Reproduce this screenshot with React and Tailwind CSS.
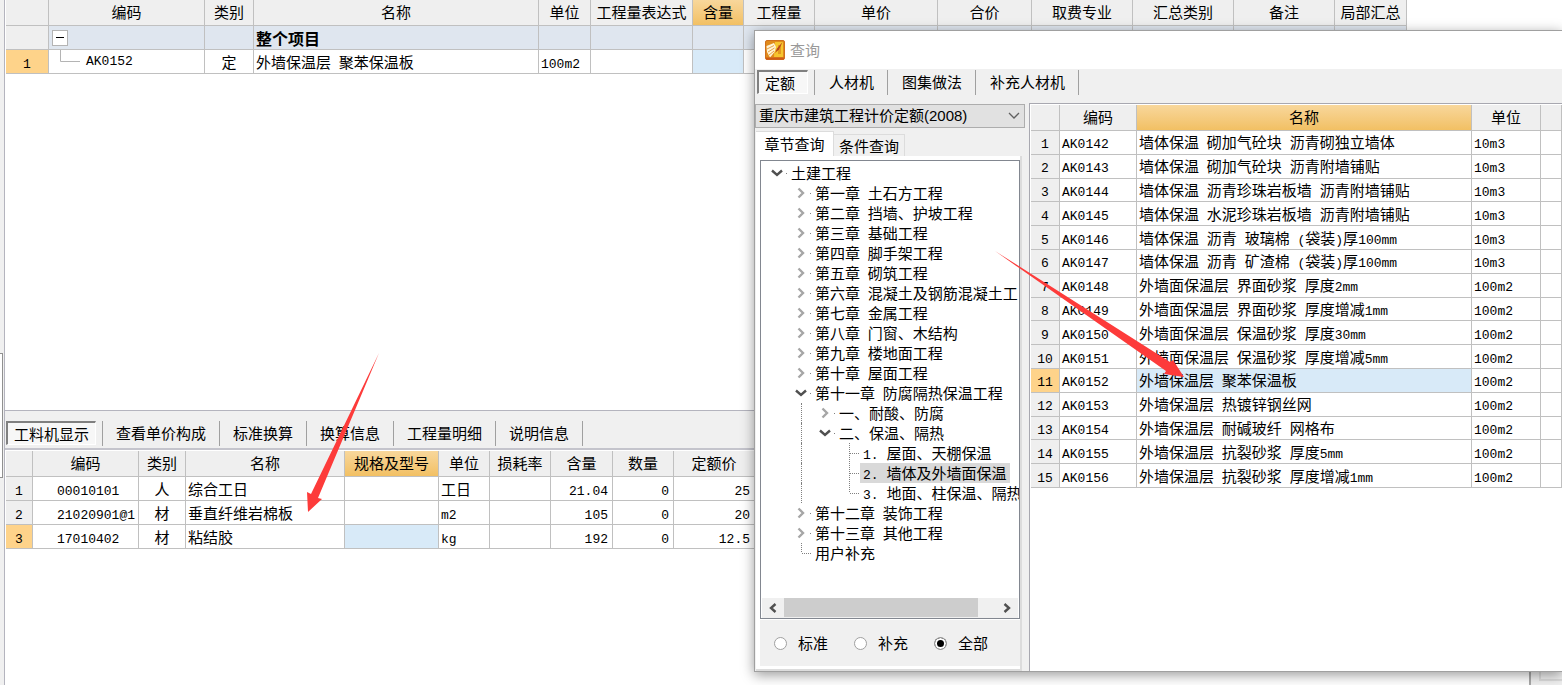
// Budget editor: item grid on top, resource breakdown below, quota lookup window over both
import React, { useState } from 'react';
import clsx from 'clsx';

// ============================================================================
// DATA
// ============================================================================
const ITEM_COLUMNS = [
  { label: '', width: 'w-[43px]' },
  { label: '编码', width: 'w-[156px]' },
  { label: '类别', width: 'w-[49px]' },
  { label: '名称', width: 'w-[285px]' },
  { label: '单位', width: 'w-[52px]' },
  { label: '工程量表达式', width: 'w-[102px]' },
  { label: '含量', width: 'w-[51px]', active: true },
  { label: '工程量', width: 'w-[71px]' },
  { label: '单价', width: 'w-[123px]' },
  { label: '合价', width: 'w-[94px]' },
  { label: '取费专业', width: 'w-[101px]' },
  { label: '汇总类别', width: 'w-[101px]' },
  { label: '备注', width: 'w-[101px]' },
  { label: '局部汇总', width: 'w-[72px]' },
];

const RESOURCE_COLUMNS = [
  { label: '', width: 'w-[27px]' },
  { label: '编码', width: 'w-[106px]' },
  { label: '类别', width: 'w-[47px]' },
  { label: '名称', width: 'w-[159px]' },
  { label: '规格及型号', width: 'w-[94px]', active: true },
  { label: '单位', width: 'w-[51px]' },
  { label: '损耗率', width: 'w-[61px]' },
  { label: '含量', width: 'w-[62px]' },
  { label: '数量', width: 'w-[61px]' },
  { label: '定额价', width: 'w-[81px]' },
];

const RESOURCES = [
  { code: '00010101', type: '人', name: '综合工日', unit: '工日', content: '21.04', amount: '0', price: '25' },
  { code: '21020901@1', type: '材', name: '垂直纤维岩棉板', unit: 'm2', content: '105', amount: '0', price: '20' },
  { code: '17010402', type: '材', name: '粘结胶', unit: 'kg', content: '192', amount: '0', price: '12.5' },
];

const QUOTA_COLUMNS = [
  { label: '', width: 'w-[29px]' },
  { label: '编码', width: 'w-[77px]' },
  { label: '名称', width: 'w-[335px]', active: true },
  { label: '单位', width: 'w-[69px]' },
  { label: '', width: 'w-auto' },
];

const QUOTAS = [
  ['AK0142', '墙体保温 砌加气砼块 沥青砌独立墙体', '10m3'],
  ['AK0143', '墙体保温 砌加气砼块 沥青附墙铺贴', '10m3'],
  ['AK0144', '墙体保温 沥青珍珠岩板墙 沥青附墙铺贴', '10m3'],
  ['AK0145', '墙体保温 水泥珍珠岩板墙 沥青附墙铺贴', '10m3'],
  ['AK0146', '墙体保温 沥青 玻璃棉 (袋装)厚100mm', '10m3'],
  ['AK0147', '墙体保温 沥青 矿渣棉 (袋装)厚100mm', '10m3'],
  ['AK0148', '外墙面保温层 界面砂浆 厚度2mm', '100m2'],
  ['AK0149', '外墙面保温层 界面砂浆 厚度增减1mm', '100m2'],
  ['AK0150', '外墙面保温层 保温砂浆 厚度30mm', '100m2'],
  ['AK0151', '外墙面保温层 保温砂浆 厚度增减5mm', '100m2'],
  ['AK0152', '外墙保温层 聚苯保温板', '100m2'],
  ['AK0153', '外墙保温层 热镀锌钢丝网', '100m2'],
  ['AK0154', '外墙保温层 耐碱玻纤 网格布', '100m2'],
  ['AK0155', '外墙保温层 抗裂砂浆 厚度5mm', '100m2'],
  ['AK0156', '外墙保温层 抗裂砂浆 厚度增减1mm', '100m2'],
];

// guide: ancestor level whose line runs past this row; last: closes its branch
const TREE = [
  { level: 0, label: '土建工程', open: true },
  { level: 1, label: '第一章 土石方工程', open: false },
  { level: 1, label: '第二章 挡墙、护坡工程', open: false },
  { level: 1, label: '第三章 基础工程', open: false },
  { level: 1, label: '第四章 脚手架工程', open: false },
  { level: 1, label: '第五章 砌筑工程', open: false },
  { level: 1, label: '第六章 混凝土及钢筋混凝土工', open: false },
  { level: 1, label: '第七章 金属工程', open: false },
  { level: 1, label: '第八章 门窗、木结构', open: false },
  { level: 1, label: '第九章 楼地面工程', open: false },
  { level: 1, label: '第十章 屋面工程', open: false },
  { level: 1, label: '第十一章 防腐隔热保温工程', open: true },
  { level: 2, label: '一、耐酸、防腐', open: false, guide: 1 },
  { level: 2, label: '二、保温、隔热', open: true, guide: 1 },
  { level: 3, label: '1. 屋面、天棚保温', guide: 1 },
  { level: 3, label: '2. 墙体及外墙面保温', guide: 1 },
  { level: 3, label: '3. 地面、柱保温、隔热', guide: 1, last: true },
  { level: 1, label: '第十二章 装饰工程', open: false },
  { level: 1, label: '第十三章 其他工程', open: false },
  { level: 1, label: '用户补充', last: true },
];

// ============================================================================
// SHARED PIECES
// ============================================================================

// Latin runs and spaces are set half a Han character wide
function Text({ children }) {
  return String(children)
    .split(/([\x20-\x7e]+)/)
    .filter(Boolean)
    .map((run, i) =>
      /^[\x20-\x7e]/.test(run) ? (
        <span key={i} className="font-['Liberation_Mono',monospace] text-[13px] leading-none whitespace-pre">{run}</span>
      ) : (
        run
      )
    );
}

function HeadRow({ columns }) {
  return (
    <thead>
      <tr className="h-[26px]">
        {columns.map((col, i) => (
          <th
            key={i}
            className={clsx(
              col.width,
              'border-r border-b border-[#c0c0c0] p-0 pb-0.5 text-center font-normal',
              col.active ? 'bg-linear-to-b from-[#f8d79b] to-[#f2c063]' : 'bg-[#efefef]'
            )}
          >
            {col.label}
          </th>
        ))}
      </tr>
    </thead>
  );
}

function Cell({ className, children }) {
  return (
    <td className={clsx('overflow-hidden border-r border-b border-[#c0c0c0] px-0.5 py-0 whitespace-nowrap', className)}>
      {children}
    </td>
  );
}

function RowNumber({ n, active }) {
  return (
    <Cell className={clsx('text-center', active ? 'bg-[#fed38a]' : 'bg-[#efefef]')}>
      <Text>{n}</Text>
    </Cell>
  );
}

function ButtonBar({ items, className, firstPadding, padding }) {
  const [active, setActive] = useState(items[0]);
  return (
    <div className={clsx('flex items-start', className)}>
      {items.map((item, i) => (
        <div key={item} className={clsx('h-[25px] border-r border-[#a0a0a0]', i === 0 && 'pr-[6px]')}>
          <button
            type="button"
            onClick={() => setActive(item)}
            className={clsx(
              'h-6',
              i === 0 ? firstPadding : padding,
              item === active
                ? 'border-t-2 border-r border-b border-l-2 border-t-[#808080] border-r-white border-b-white border-l-[#808080] bg-[#f7f7f7] leading-5'
                : 'leading-6'
            )}
          >
            {item}
          </button>
        </div>
      ))}
    </div>
  );
}

function Chevron({ open }) {
  return (
    <svg viewBox="0 0 16 20" className="h-5 w-4 shrink-0" fill="none" strokeWidth="2.4">
      {open ? (
        <path d="M3 7.5 8 12l5-4.5" stroke="#505050" />
      ) : (
        <path d="M5.5 5.5 10 10l-4.5 4.5" stroke="#a6a6a6" />
      )}
    </svg>
  );
}

// ============================================================================
// MAIN WINDOW
// ============================================================================
function ItemGrid() {
  return (
    <table className="w-[1401px] table-fixed border-separate border-spacing-0 leading-5">
      <HeadRow columns={ITEM_COLUMNS} />
      <tbody>
        <tr className="h-6 bg-[#dfe6ef]">
          <RowNumber n="" />
          <Cell>
            <button type="button" aria-label="折叠" className="ml-px flex size-4 items-center justify-center border border-[#b4b4b4] bg-white">
              <span className="h-px w-2 bg-black" />
            </button>
          </Cell>
          <Cell />
          <Cell className="text-base leading-5 font-bold">整个项目</Cell>
          {ITEM_COLUMNS.slice(4, 13).map((col) => (
            <Cell key={col.label} />
          ))}
          <Cell className="text-center">
            <input type="checkbox" aria-label="局部汇总" className="block mx-auto size-4 appearance-none border-2 border-[#505050] bg-white" />
          </Cell>
        </tr>
        <tr className="h-6">
          <RowNumber n="1" active />
          <Cell>
            <div className="flex items-center">
              <svg viewBox="0 0 35 23" className="h-[23px] w-[35px]" fill="none" stroke="#b4b4b4">
                <path d="M9.5 0V11.5H29" />
              </svg>
              <Text>AK0152</Text>
            </div>
          </Cell>
          <Cell className="text-center">定</Cell>
          <Cell><Text>外墙保温层 聚苯保温板</Text></Cell>
          <Cell><Text>100m2</Text></Cell>
          <Cell />
          <Cell className="bg-[#d8eaf8]" />
          {ITEM_COLUMNS.slice(7).map((col) => (
            <Cell key={col.label} />
          ))}
        </tr>
      </tbody>
    </table>
  );
}

function ResourceGrid() {
  return (
    <table className="w-[749px] table-fixed border-separate border-spacing-0 leading-5">
      <HeadRow columns={RESOURCE_COLUMNS} />
      <tbody>
        {RESOURCES.map((r, i) => (
          <tr key={r.code} className="h-6">
            <RowNumber n={i + 1} active={i === 2} />
            <Cell className="pl-6"><Text>{r.code}</Text></Cell>
            <Cell className="text-center">{r.type}</Cell>
            <Cell>{r.name}</Cell>
            <Cell className={i === 2 && 'bg-[#d8eaf8]'} />
            <Cell><Text>{r.unit}</Text></Cell>
            <Cell />
            <Cell className="pr-1 text-right"><Text>{r.content}</Text></Cell>
            <Cell className="pr-1 text-right"><Text>{r.amount}</Text></Cell>
            <Cell className="pr-1 text-right"><Text>{r.price}</Text></Cell>
          </tr>
        ))}
      </tbody>
    </table>
  );
}

function MainWindow() {
  return (
    <div className="flex h-full">
      <div className="w-[5px] shrink-0 border-r border-[#b4b4be] pt-[353px]">
        <div className="h-[125px] w-[3px] border-y border-r border-[#909090] bg-white" />
      </div>
      <div className="flex min-w-0 flex-1 flex-col">
        <section className="flex-3 basis-0 overflow-hidden border-b border-[#b4b4be] bg-white pl-px">
          <ItemGrid />
        </section>
        <div className="flex flex-2 basis-0">
          <section className="flex min-w-0 flex-1 flex-col">
            <ButtonBar
              items={['工料机显示', '查看单价构成', '标准换算', '换算信息', '工程量明细', '说明信息']}
              className="h-[37px] pt-[10px] pl-px"
              firstPadding="px-[6px]"
              padding="px-[13px]"
            />
            <div className="flex-1 overflow-hidden border-t-2 border-[#c4c4cc] bg-white pt-px pl-px">
              <ResourceGrid />
            </div>
          </section>
          <aside className="w-[33px] border-l-2 border-[#a8a8a8] pb-1 pl-2">
            <div className="h-full border-b-2 border-l-2 border-[#dcdcdc]" />
          </aside>
        </div>
      </div>
    </div>
  );
}

// ============================================================================
// QUOTA LOOKUP WINDOW
// ============================================================================
function AppIcon() {
  return (
    <svg viewBox="0 0 20 20" className="size-5">
      <rect x=".5" y=".5" width="19" height="19" rx="1.5" fill="#e08a1c" stroke="#cf6f1c" />
      <path d="M10 2h8v15H9z" fill="#f6c52f" />
      <path d="M13 5h3v9h-3z" fill="#e39a1f" />
      <path d="M1.500 6 9 3l2 4-1.500 5L5 17.500 2 12z" fill="#fff4d6" />
      <path d="M2 9l7-3.500M3 12l6.500-4M4 15l5-4" stroke="#e6a14a" />
      <path d="M17.500 2 12 8.500 10 13l4-3.500z" fill="#b8431c" />
      <path d="M1 18.500h18" stroke="#cf5a16" strokeWidth="2" />
    </svg>
  );
}

function TreeRow({ node, selected, onSelect }) {
  const isLeaf = node.open === undefined;
  return (
    <li
      role="treeitem"
      aria-selected={selected}
      aria-expanded={node.open}
      onClick={onSelect}
      className="flex h-5 cursor-default pl-2 leading-5 whitespace-nowrap"
    >
      {Array.from({ length: node.level }, (_, i) => (
        <span key={i} className="w-6 shrink-0 pl-2">
          {node.guide === i && <span className="block h-full border-l border-dotted border-[#808080]" />}
        </span>
      ))}
      {isLeaf ? (
        <svg viewBox="0 0 19 20" className="h-5 w-[19px] shrink-0" fill="none" stroke="#808080" strokeDasharray="1 1">
          <path d={node.last ? 'M8.5 0V10' : 'M8.5 0V20'} />
          <path d="M9 10.5H19" />
        </svg>
      ) : (
        <>
          <Chevron open={node.open} />
          <span className="w-[3px] shrink-0 pt-[10px]">
            <span className="ml-px block size-px bg-[#808080]" />
          </span>
        </>
      )}
      <span className={clsx('shrink-0 pr-1 pl-[3px]', selected && 'bg-[#d9d9d9]')}>
        <Text>{node.label}</Text>
      </span>
    </li>
  );
}

function ScrollArrow({ label, d }) {
  return (
    <button type="button" aria-label={label} className="flex w-[22px] items-center justify-center">
      <svg viewBox="0 0 10 10" className="size-[10px]" fill="none" stroke="#505050" strokeWidth="2.4">
        <path d={d} />
      </svg>
    </button>
  );
}

function ChapterPanel() {
  const [selected, setSelected] = useState('2. 墙体及外墙面保温');
  const [scope, setScope] = useState('全部');

  return (
    <aside className="flex w-[270px] shrink-0 flex-col pt-px">
      <div className="relative">
        <select
          aria-label="定额库"
          className="block h-6 w-full appearance-none border border-[#adadad] bg-[#e1e1e1] pl-[3px] font-['Liberation_Sans','Noto_Sans_CJK_SC',sans-serif] leading-5"
        >
          <option>重庆市建筑工程计价定额(2008)</option>
        </select>
        <svg viewBox="0 0 12 8" className="pointer-events-none absolute top-2 right-[5px] h-2 w-3" fill="none" stroke="#606060" strokeWidth="1.3">
          <path d="M1 1l5 5 5-5" />
        </svg>
      </div>

      <div role="tablist" className="mt-[3px] flex items-end pl-px">
        <button type="button" role="tab" aria-selected="true" className="h-[25px] w-[78px] border-t border-r border-[#dcdcdc] bg-white leading-[22px]">
          章节查询
        </button>
        <button type="button" role="tab" aria-selected="false" className="h-[22px] w-[71px] border-t border-r border-[#dcdcdc] leading-5">
          条件查询
        </button>
      </div>

      <div className="mr-[3px] ml-px flex min-h-0 flex-1 flex-col border-r-2 border-b-2 border-[#dcdcdc] bg-white pt-1 pb-[3px] pl-1">
        <div className="flex min-h-0 flex-1 flex-col border border-[#828790]">
          <ul role="tree" className="min-h-0 flex-1 overflow-hidden pt-0.5">
            {TREE.map((node) => (
              <TreeRow
                key={node.label}
                node={node}
                selected={node.label === selected}
                onSelect={() => setSelected(node.label)}
              />
            ))}
          </ul>
          <div className="mx-px flex h-5 bg-[#f0f0f0]">
            <ScrollArrow label="向左滚动" d="M7.5 1 3 5l4.5 4" />
            <div className="flex-1">
              <div className="h-[19px] w-11/12 bg-[#cdcdcd]" />
            </div>
            <ScrollArrow label="向右滚动" d="M2.5 1 7 5l-4.5 4" />
          </div>
        </div>
        <div className="mt-px flex h-[46px] items-center bg-[#f0f0f0] pl-[14px]">
          {['标准', '补充', '全部'].map((name) => (
            <label key={name} className="flex w-20 items-center gap-[11px]">
              <input
                type="radio"
                name="scope"
                checked={scope === name}
                onChange={() => setScope(name)}
                className="size-[13px] appearance-none rounded-full border border-[#a0a0a0] bg-white checked:bg-black checked:shadow-[inset_0_0_0_2px_white]"
              />
              {name}
            </label>
          ))}
        </div>
      </div>
    </aside>
  );
}

function QuotaGrid() {
  const [active, setActive] = useState(10);
  return (
    <div className="ml-1 min-w-0 flex-1 overflow-hidden border-t border-l border-[#a8a8b0] bg-white pt-px pl-px">
      <table className="h-[383px] w-full table-fixed border-separate border-spacing-0 leading-5">
        <HeadRow columns={QUOTA_COLUMNS} />
        <tbody>
          {QUOTAS.map(([code, name, unit], i) => (
            <tr key={code} onClick={() => setActive(i)}>
              <RowNumber n={i + 1} active={i === active} />
              <Cell><Text>{code}</Text></Cell>
              <Cell className={i === active && 'bg-[#d8eaf8]'}><Text>{name}</Text></Cell>
              <Cell><Text>{unit}</Text></Cell>
              <Cell />
            </tr>
          ))}
        </tbody>
      </table>
    </div>
  );
}

function LookupWindow() {
  return (
    <div
      role="dialog"
      aria-label="查询"
      className="absolute top-[30px] right-0 bottom-[13px] left-[754px] flex flex-col border-y border-l border-[#a0a0a0] bg-[#f0f0f0] shadow-[0_3px_12px_rgba(0,0,0,0.4)]"
    >
      <header className="flex h-[38px] shrink-0 items-center gap-[5px] bg-white pb-px pl-[10px] text-[#999]">
        <AppIcon />
        <h1>查询</h1>
      </header>
      <ButtonBar
        items={['定额', '人材机', '图集做法', '补充人材机']}
        className="h-[34px] shrink-0 pt-px pl-[2px]"
        firstPadding="pr-3 pl-[6px]"
        padding="pr-[13px] pl-[14px]"
      />
      <div className="flex min-h-0 flex-1">
        <ChapterPanel />
        <QuotaGrid />
      </div>
    </div>
  );
}

// ============================================================================
// MAIN APP
// ============================================================================
function App() {
  return (
    <div className="relative h-screen overflow-hidden bg-[#f0f0f0] font-['Noto_Sans_CJK_SC',sans-serif] text-[15px] leading-[22px] text-black">
      <MainWindow />
      <LookupWindow />

      {/* Callout arrows */}
      <svg viewBox="0 0 80 160" className="pointer-events-none absolute top-[353px] left-[300px] h-40 w-20" fill="#fd3b3a">
        <path d="M79 0 18 145 22 146 8 159 7 139 11 141z" />
      </svg>
      <svg viewBox="0 0 190 126" className="pointer-events-none absolute top-[251px] left-[995px] h-[126px] w-[190px]" fill="#fd3b3a">
        <path d="M0 0 175 111 178 109 189 126 169 123 171 120z" />
      </svg>
    </div>
  );
}

export default App;
